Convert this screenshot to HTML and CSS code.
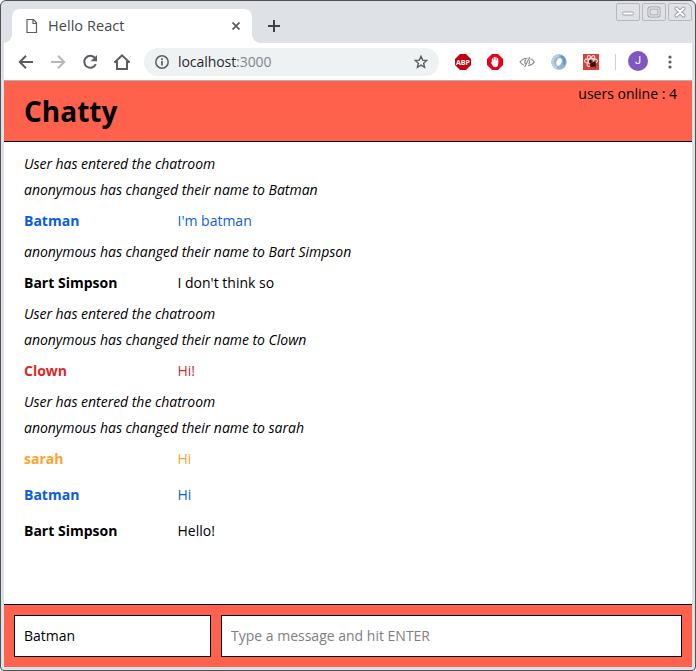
FILE: index.html
```html
<!DOCTYPE html>
<html lang="en">
<head>
<meta charset="utf-8">
<title>Hello React</title>
<link rel="stylesheet" href="styles.css">
</head>
<body>
<div class="window">
  <div class="tabstrip">
    <div class="tab">
      <svg class="page-icon" width="12" height="16" viewBox="0 0 12 16" fill="none" stroke="#5a5d61" stroke-width="1.2"><path d="M1 1.500h6.400L10.500 4.800v9.700H1z"/><path d="M7 2v3.500h3.500"/></svg>
      <span class="tab-title">Hello React</span>
      <svg class="tab-close" width="8" height="8" viewBox="0 0 8 8" stroke="#5a5d61" stroke-width="1.7"><path d="M.5.5l7 7M7.5.5l-7 7"/></svg>
    </div>
    <svg class="new-tab" width="12" height="12" viewBox="0 0 12 12" stroke="#3f4246" stroke-width="2"><path d="M6 0v12M0 6h12"/></svg>
    <div class="controls">
      <span class="control"><svg width="22" height="16" viewBox="0 0 22 16"><rect x="5.5" y="8" width="11" height="3" rx="1.5" fill="#fff" stroke="#a2a2aa"/></svg></span>
      <span class="control"><svg width="22" height="16" viewBox="0 0 22 16" fill="none"><rect x="6" y="4" width="10" height="8" rx="1" stroke="#a0a0a8" stroke-width="3"/><rect x="6" y="4" width="10" height="8" rx="1" stroke="#fff"/></svg></span>
      <span class="control last"><svg width="22" height="16" viewBox="0 0 22 16" fill="none" stroke-linecap="round"><path d="M7.500 4.500l7 7M14.500 4.500l-7 7" stroke="#a0a0a8" stroke-width="4"/><path d="M7.500 4.500l7 7M14.500 4.500l-7 7" stroke="#fff" stroke-width="2"/></svg></span>
    </div>
  </div>
  <div class="toolbar">
    <svg class="nav" width="136" height="36" viewBox="0 0 136 36" fill="none" stroke="#5a5d61" stroke-width="2">
      <path d="M29 18H16.500M22 11.800L15.800 18l6.200 6.200"/>
      <path d="M47 18h12.500M54 11.800L60.200 18 54 24.200" stroke="#b6b8ba"/>
      <path d="M91 14a6 6 0 1 0 .8 6.200"/><path d="M93 11v6.300h-6.300z" fill="#5a5d61" stroke="none"/>
      <path d="M113 17.500v7.500h10v-7.500M110.500 18.500L118 11.300l7.500 7.200"/><path d="M110.500 18h3.500M122 18h3.500"/>
    </svg>
    <div class="address">
      <svg width="14" height="14" viewBox="0 0 14 14" fill="none" stroke="#5a5d61" stroke-width="1.500"><circle cx="7" cy="7" r="6.200"/><path d="M7 6v4.500M7 3.300v1.600" stroke-width="1.700"/></svg>
      <span class="url">localhost<span class="port">:3000</span></span>
      <svg class="star" width="14" height="14" viewBox="0 0 14 14" fill="none" stroke="#5a5d61" stroke-width="1.400"><path d="M7 1.300l1.650 3.800 4.150.35-3.150 2.750.95 4.100L7 10.150 3.400 12.300l.95-4.100L1.200 5.450l4.150-.35z"/></svg>
    </div>
    <div class="extensions">
      <svg width="16" height="16" viewBox="0 0 16 16"><path d="M5 0h6l5 5v6l-5 5H5l-5-5V5z" fill="#c4000f"/><text x="8" y="10.900" text-anchor="middle" textLength="14" lengthAdjust="spacingAndGlyphs" class="abp">ABP</text></svg>
      <svg width="16" height="16" viewBox="0 0 16 16"><path d="M5 0h6l5 5v6l-5 5H5l-5-5V5z" fill="#e8001b"/><path d="M5.500 8V4.800M7.200 7.500V3.300M8.900 7.500V3.300M10.600 8V4.600" stroke="#fff" stroke-width="1.300" stroke-linecap="round"/><path d="M4.850 6.500h6.400V10q-.3 3.200-3 3.200-2 0-3.200-2.500L3.800 8.200l1.050.3z" fill="#fff"/></svg>
      <svg width="16" height="16" viewBox="0 0 16 16" fill="none" stroke="#85878a" stroke-width="1.100"><path d="M8.500 4.200Q4 4 1 8q1.500 2.200 4 3.200M11.500 4.800Q14 6 15.200 8q-2 3.200-6 3.600M10.800 3L5.700 13M7 5.500q-2.300 2-.5 4.500M10.500 6.300q.8 2-.8 3.700"/></svg>
      <svg width="16" height="16" viewBox="0 0 16 16" fill="none"><circle cx="8" cy="8" r="7.700" fill="#91b4d2"/><path d="M8 1.500A6.500 6.500 0 0 0 6 14" stroke="#bdd0e1" stroke-width="2.500"/><path d="M10 2q5 3 3 8.500" stroke="#6591ba" stroke-width="2"/><ellipse cx="8" cy="8" rx="2.500" ry="4" fill="#fff" transform="rotate(20 8 8)"/></svg>
      <svg width="16" height="16" viewBox="0 0 16 16" fill="none"><path fill="#d94038" d="M0 0h16v16H0z"/><g stroke="#f9dddb" stroke-width="1.100"><ellipse cx="8" cy="7" rx="6.500" ry="2.400"/><ellipse cx="8" cy="7" rx="2.400" ry="6" transform="rotate(30 8 7)"/><ellipse cx="8" cy="7" rx="2.400" ry="6" transform="rotate(-30 8 7)"/></g><ellipse cx="10" cy="10.500" rx="3.200" ry="2.400" fill="#351719" transform="rotate(-30 10 10.500)"/><circle cx="7.500" cy="7.500" r="1.500" fill="#351719"/><path d="M6.500 9l6 4.500M11 7l1.500 6M7.500 12.500l5.500-4" stroke="#351719" stroke-width=".8"/></svg>
    </div>
    <span class="divider"></span>
    <span class="avatar">J</span>
    <svg class="menu" width="4" height="14" viewBox="0 0 4 14" fill="#5a5d61"><circle cx="2" cy="2" r="1.600"/><circle cx="2" cy="7" r="1.600"/><circle cx="2" cy="12" r="1.600"/></svg>
  </div>
  <header class="header">
    <h1>Chatty</h1>
    <span class="online">users online : 4</span>
  </header>
  <main class="messages">
    <p class="notice">User has entered the chatroom</p>
    <p class="notice">anonymous has changed their name to Batman</p>
    <div class="message blue"><b>Batman</b><span>I'm batman</span></div>
    <p class="notice">anonymous has changed their name to Bart Simpson</p>
    <div class="message"><b>Bart Simpson</b><span>I don't think so</span></div>
    <p class="notice">User has entered the chatroom</p>
    <p class="notice">anonymous has changed their name to Clown</p>
    <div class="message red"><b>Clown</b><span>Hi!</span></div>
    <p class="notice">User has entered the chatroom</p>
    <p class="notice">anonymous has changed their name to sarah</p>
    <div class="message orange"><b>sarah</b><span>Hi</span></div>
    <div class="message blue"><b>Batman</b><span>Hi</span></div>
    <div class="message"><b>Bart Simpson</b><span>Hello!</span></div>
  </main>
  <footer class="footer">
    <input class="field name" value="Batman" aria-label="Name">
    <input class="field text" placeholder="Type a message and hit ENTER" aria-label="Message">
  </footer>
</div>
</body>
</html>
```
FILE: styles.css
```css
* { box-sizing: border-box; }
body { margin: 0; background: #fff; font: 14px "Open Sans", sans-serif; color: #000; }
svg { display: block; flex: none; }

.window {
  width: 696px; height: 671px; display: flex; flex-direction: column;
  background: #dee1e6; border: 1px solid #525255; border-radius: 6px 6px 4px 4px;
  padding: 0 3px 3px; overflow: hidden;
}
.tabstrip { height: 42px; flex: none; display: flex; align-items: flex-start; padding: 8px 0 0 8px; }
.tab {
  width: 240px; height: 34px; background: #fff; border-radius: 8px 8px 0 0;
  display: flex; align-items: center; padding: 0 12px 0 14px; position: relative;
}
.tab::before, .tab::after {
  content: ""; position: absolute; bottom: 0; width: 8px; height: 8px;
}
.tab::before { left: -8px; background: radial-gradient(circle at 0 0, transparent 7.5px, #fff 8px); }
.tab::after { right: -8px; background: radial-gradient(circle at 100% 0, transparent 7.5px, #fff 8px); }
.tab-title { flex: 1; margin-left: 10px; padding-bottom: 2px; font-size: 14.5px; letter-spacing: .05px; color: #45484c; }
.new-tab { margin: 11px 0 0 16px; }
.controls { margin: -6px 0 0 auto; display: flex; gap: 2px; }
.control { width: 24px; height: 18px; border: 1px solid #b8b6c0; border-radius: 2px; }
.last { border-top-right-radius: 6px; }

.toolbar {
  height: 38px; flex: none; display: flex; align-items: center; background: #fff;
  border-bottom: 1px solid #aeafb1; padding-right: 20px;
}
.address {
  width: 295px; height: 28px; margin-left: 4px; border-radius: 14px; background: #eff2f3;
  display: flex; align-items: center; padding: 0 11px;
}
.url { margin-left: 9px; flex: 1; letter-spacing: -.06px; color: #27292c; }
.port { color: #80868b; }
.extensions { display: flex; gap: 16px; margin-left: 16px; }
.abp { font: bold 7.5px "Open Sans", sans-serif; fill: #fff; }
.divider { width: 1px; height: 16px; background: #ced0d2; margin-left: 16px; }
.avatar {
  width: 20px; height: 20px; margin: -1px 0 0 12px; border-radius: 50%; background: #7e57c2;
  color: #fff; font: 11px/20px Roboto, sans-serif; text-align: center;
}
.menu { margin-left: auto; }

.header {
  height: 61px; flex: none; background: #ff624c; border-bottom: 1px solid #000;
  display: flex; justify-content: space-between; padding: 0 15px 0 20px;
}
h1 { margin: 0; font-size: 28px; line-height: 61px; }
.online { line-height: 26px; }

.messages { flex: 1; background: #fff; padding: 9px 20px 0; }
.notice { margin: 0; line-height: 26px; font-style: italic; letter-spacing: -.025px; }
.message { display: flex; line-height: 36px; }
.message b { width: 153.5px; }
.blue { color: #0b5ddd; }
.red { color: #d52b2b; }
.orange { color: #ffa32f; }

.footer {
  height: 63px; flex: none; background: #ff624c; border-top: 1px solid #000;
  display: flex; gap: 10px; padding: 10px;
}
.field { height: 42px; border: 1px solid #000; padding: 0 9px 1px; font: inherit; background: #fff; color: #000; outline: 0; border-radius: 0; }
.field::placeholder { color: #808080; opacity: 1; }
.name { width: 197px; }
.text { flex: 1; min-width: 0; }
```
